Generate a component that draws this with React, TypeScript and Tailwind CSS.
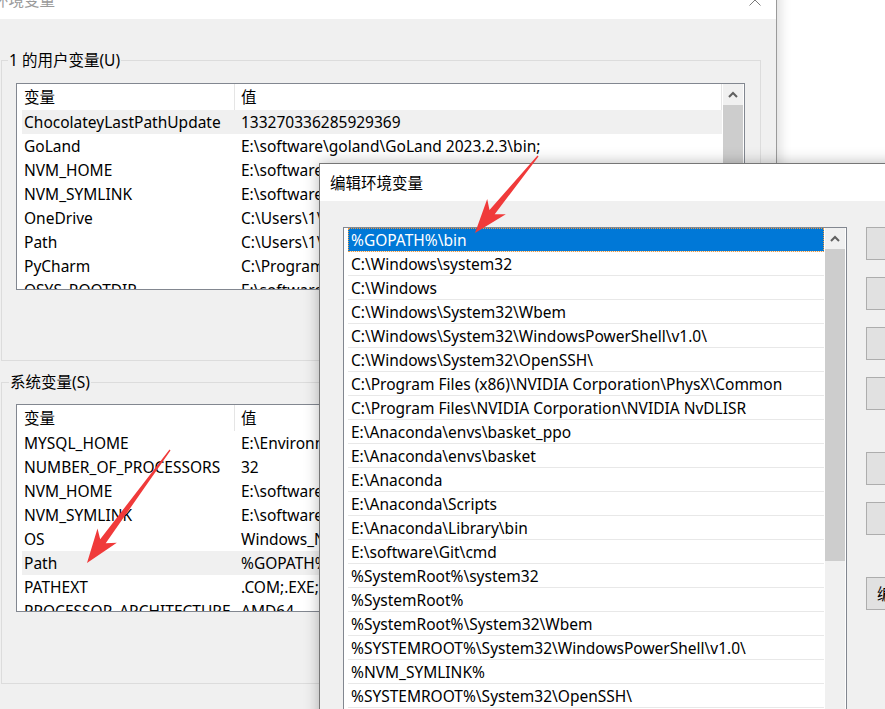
import React from "react";

type Row = [string, string];

const userRows: Row[] = [
  ["ChocolateyLastPathUpdate", "133270336285929369"],
  ["GoLand", "E:\\software\\goland\\GoLand 2023.2.3\\bin;"],
  ["NVM_HOME", "E:\\software\\nvm"],
  ["NVM_SYMLINK", "E:\\software\\nodejs"],
  ["OneDrive", "C:\\Users\\1\\OneDrive"],
  ["Path", "C:\\Users\\1\\AppData\\Local\\Microsoft\\WindowsApps;"],
  ["PyCharm", "C:\\Program Files\\JetBrains\\PyCharm\\bin;"],
  ["QSYS_ROOTDIR", "E:\\software\\quartus\\bin64"],
];

const sysRows: Row[] = [
  ["MYSQL_HOME", "E:\\Environment\\mysql"],
  ["NUMBER_OF_PROCESSORS", "32"],
  ["NVM_HOME", "E:\\software\\nvm"],
  ["NVM_SYMLINK", "E:\\software\\nodejs"],
  ["OS", "Windows_NT"],
  ["Path", "%GOPATH%\\bin;C:\\Windows\\system32"],
  ["PATHEXT", ".COM;.EXE;.BAT;.CMD;.VBS"],
  ["PROCESSOR_ARCHITECTURE", "AMD64"],
];

const paths = [
  "%GOPATH%\\bin",
  "C:\\Windows\\system32",
  "C:\\Windows",
  "C:\\Windows\\System32\\Wbem",
  "C:\\Windows\\System32\\WindowsPowerShell\\v1.0\\",
  "C:\\Windows\\System32\\OpenSSH\\",
  "C:\\Program Files (x86)\\NVIDIA Corporation\\PhysX\\Common",
  "C:\\Program Files\\NVIDIA Corporation\\NVIDIA NvDLISR",
  "E:\\Anaconda\\envs\\basket_ppo",
  "E:\\Anaconda\\envs\\basket",
  "E:\\Anaconda",
  "E:\\Anaconda\\Scripts",
  "E:\\Anaconda\\Library\\bin",
  "E:\\software\\Git\\cmd",
  "%SystemRoot%\\system32",
  "%SystemRoot%",
  "%SystemRoot%\\System32\\Wbem",
  "%SYSTEMROOT%\\System32\\WindowsPowerShell\\v1.0\\",
  "%NVM_SYMLINK%",
  "%SYSTEMROOT%\\System32\\OpenSSH\\",
  "%USERPROFILE%\\AppData\\Local\\Microsoft\\WindowsApps",
];

function ScrollUp() {
  return (
    <div className="h-[21px] shrink-0 bg-[#f0f0f0] flex items-center justify-center">
      <svg width="10" height="7" viewBox="0 0 10 7">
        <path d="M1 6 L5 2 L9 6" stroke="#606060" strokeWidth="2" fill="none" />
      </svg>
    </div>
  );
}

function VarTable({ rows, sel, cls }: { rows: Row[]; sel: number; cls: string }) {
  return (
    <div className={"flex border border-[#828790] bg-white w-[729px] overflow-hidden " + cls}>
      <div className="flex-1 flex flex-col overflow-hidden">
        <div className="h-[26px] flex shrink-0">
          <div className="w-[218px] h-full pl-[7px] flex items-center border-r border-[#e5e5e5]">变量</div>
          <div className="flex-1 pl-[6px] flex items-center border-r border-[#e5e5e5] mr-[1px]">值</div>
        </div>
        {rows.map((r, i) => (
          <div
            key={i}
            className={
              "h-[24px] shrink-0 flex items-center ml-[5px] mr-[1px] " + (i === sel ? "bg-[#f0f0f0]" : "")
            }
          >
            <div className="w-[212px] shrink-0 pl-[2px] whitespace-nowrap overflow-hidden">{r[0]}</div>
            <div className="pl-[7px] whitespace-nowrap">{r[1]}</div>
          </div>
        ))}
      </div>
      <div className="w-[20px] mr-[1px] shrink-0 flex flex-col bg-[#f0f0f0]">
        <ScrollUp />
        <div className="flex-1 bg-[#cdcdcd]" />
      </div>
    </div>
  );
}

function arrowPoints(tx: number, ty: number, px: number, py: number) {
  const dx = px - tx;
  const dy = py - ty;
  const L = Math.hypot(dx, dy);
  const ux = dx / L;
  const uy = dy / L;
  const nx = -uy;
  const ny = ux;
  const h = 32;
  const w = 12;
  const s0 = 0.6;
  const s1 = 3.4;
  const bx = px - ux * h;
  const by = py - uy * h;
  const pts = [
    [tx + nx * s0, ty + ny * s0],
    [bx + ux * 5 + nx * s1, by + uy * 5 + ny * s1],
    [bx - ux * 2 + nx * w, by - uy * 2 + ny * w],
    [px, py],
    [bx - ux * 2 - nx * w, by - uy * 2 - ny * w],
    [bx + ux * 5 - nx * s1, by + uy * 5 - ny * s1],
    [tx - nx * s0, ty - ny * s0],
  ];
  return pts.map((p) => p[0].toFixed(1) + "," + p[1].toFixed(1)).join(" ");
}

export default function App() {
  return (
    <div className="relative w-[885px] h-[709px] overflow-hidden bg-white text-[15.5px] leading-[20px] text-black font-[family-name:'Noto_Sans','Noto_Sans_CJK_SC',sans-serif]">
      {/* Back window: 环境变量 */}
      <div className="absolute left-0 top-[-13px] w-[777px] h-[760px] bg-[#f0f0f0] border-r border-[#9a9a9a] shadow-[4px_0_10px_rgba(0,0,0,0.12)] flex flex-col">
        <div className="relative h-[32px] shrink-0 bg-white">
          <div className="h-[26px] flex items-center ml-[-7px] text-[#9a9a9a]">环境变量</div>
          <svg className="absolute left-[749px] top-[7px]" width="12" height="12" viewBox="0 0 12 12">
            <path d="M0.5 0.5 L11.5 11.5 M11.5 0.5 L0.5 11.5" stroke="#7a7a7a" strokeWidth="1" fill="none" />
          </svg>
        </div>
        <div className="relative ml-[1px] mt-[41px] w-[760px] h-[301px] shrink-0 border border-[#dcdcdc] pl-[14px] pt-[22px]">
          <div className="absolute left-[6px] top-[-11px] px-[1px] bg-[#f0f0f0]">1 的用户变量(U)</div>
          <VarTable rows={userRows} sel={0} cls="h-[207px]" />
        </div>
        <div className="relative ml-[1px] mt-[21px] w-[760px] h-[302px] shrink-0 border border-[#dcdcdc] pl-[14px] pt-[21px]">
          <div className="absolute left-[7px] top-[-11px] px-[1px] bg-[#f0f0f0]">系统变量(S)</div>
          <VarTable rows={sysRows} sel={5} cls="h-[208px]" />
        </div>
      </div>

      {/* Front dialog: 编辑环境变量 */}
      <div className="absolute left-[319px] top-[163px] w-[620px] h-[600px] bg-[#f0f0f0] border border-[#767676] shadow-[0_0_14px_rgba(0,0,0,0.28)] flex flex-col">
        <div className="h-[37px] shrink-0 bg-white flex items-center pl-[10px]">编辑环境变量</div>
        <div className="flex pl-[23px] pt-[26px]">
          <div className="w-[504px] h-[520px] shrink-0 border border-[#828790] bg-white flex overflow-hidden">
            <div className="flex-1 flex flex-col overflow-hidden">
              {paths.map((p, i) => (
                <div
                  key={i}
                  className={
                    "h-[24px] shrink-0 ml-[4px] mr-[1px] pl-[3px] flex items-center whitespace-nowrap border-b " +
                    (i === 0
                      ? "bg-[#0078d7] text-white border-[#e8e8e8] outline outline-1 outline-dotted outline-[#f09a3e] -outline-offset-1"
                      : "border-[#e8e8e8]")
                  }
                >
                  {p}
                </div>
              ))}
            </div>
            <div className="w-[20px] mr-[1px] shrink-0 flex flex-col bg-[#f0f0f0]">
              <ScrollUp />
              <div className="h-[312px] bg-[#cdcdcd]" />
            </div>
          </div>
          <div className="ml-[19px] flex flex-col">
            <div className="w-[100px] h-[33px] bg-[#e1e1e1] border border-[#adadad]" />
            <div className="mt-[17px] w-[100px] h-[33px] bg-[#e1e1e1] border border-[#adadad]" />
            <div className="mt-[17px] w-[100px] h-[33px] bg-[#e1e1e1] border border-[#adadad]" />
            <div className="mt-[17px] w-[100px] h-[33px] bg-[#e1e1e1] border border-[#adadad]" />
            <div className="mt-[42px] w-[100px] h-[33px] bg-[#e1e1e1] border border-[#adadad]" />
            <div className="mt-[17px] w-[100px] h-[33px] bg-[#e1e1e1] border border-[#adadad]" />
            <div className="mt-[42px] w-[100px] h-[33px] bg-[#e1e1e1] border border-[#adadad] flex items-center pl-[10px] whitespace-nowrap">
              编辑文本(T)...
            </div>
          </div>
        </div>
      </div>

      {/* Annotation arrows */}
      <svg className="absolute left-0 top-0 pointer-events-none" width="885" height="709" viewBox="0 0 885 709">
        <polygon points={arrowPoints(538, 156, 475, 233)} fill="#f03a3a" />
        <polygon points={arrowPoints(170, 450, 87, 563)} fill="#f03a3a" />
      </svg>
    </div>
  );
}
